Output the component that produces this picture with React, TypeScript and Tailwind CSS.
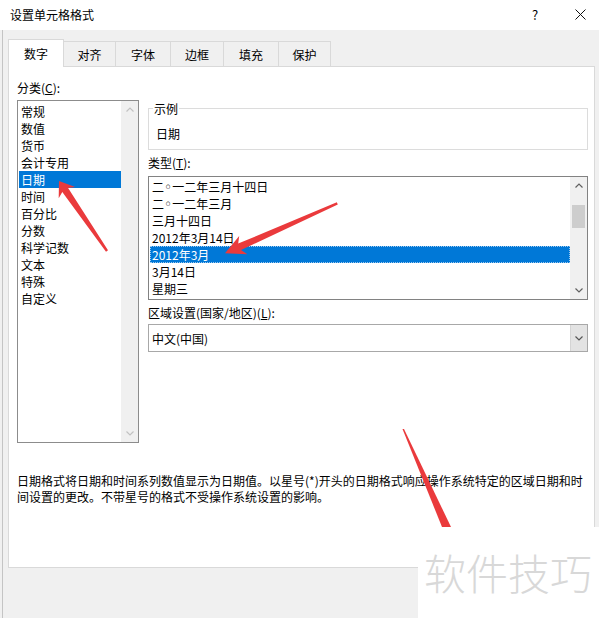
import React from "react";

const cats = ["常规", "数值", "货币", "会计专用", "日期", "时间", "百分比", "分数", "科学记数", "文本", "特殊", "自定义"];
const types = ["二◦一二年三月十四日", "二◦一二年三月", "三月十四日", "2012年3月14日", "2012年3月", "3月14日", "星期三"];
const tabs: [string, number][] = [
  ["数字", 56],
  ["对齐", 52],
  ["字体", 55],
  ["边框", 53],
  ["填充", 55],
  ["保护", 52],
];

function Chev({ up, color }: { up?: boolean; color: string }) {
  return (
    <svg width="8" height="5" viewBox="0 0 8 5">
      <polyline
        points={up ? "0.5,4.5 4,1 7.5,4.5" : "0.5,0.5 4,4 7.5,0.5"}
        fill="none"
        stroke={color}
        strokeWidth="1.2"
      />
    </svg>
  );
}

function TypeText({ t }: { t: string }) {
  const parts = t.split("◦");
  if (parts.length === 1) return <>{t}</>;
  return (
    <>
      {parts[0]}
      <span className="font-['DejaVu_Sans',sans-serif] text-[14px] leading-[14px]">◦</span>
      {parts[1]}
    </>
  );
}

export default function App() {
  return (
    <div className="relative w-[599px] h-[618px] overflow-hidden bg-[#f0f0f0] text-[12px] leading-[17px] text-black font-['Noto_Sans_CJK_SC',sans-serif]">
      {/* Title bar */}
      <div className="h-[30px] bg-white flex items-center pl-[10px] pr-[13px] pb-[2px]">
        <span className="flex-1">设置单元格格式</span>
        <span className="w-[12px] text-center mr-[34px] text-[13px]">?</span>
        <svg width="11" height="11" viewBox="0 0 11 11">
          <path d="M0.5 0.5 L10.5 10.5 M10.5 0.5 L0.5 10.5" stroke="#111" strokeWidth="1" fill="none" />
        </svg>
      </div>

      {/* Body */}
      <div className="ml-[2px] border-l border-[#c4c4c4] h-[588px] pl-[5px] pr-[4px] pt-[9px]">
        {/* Tabs */}
        <div className="flex items-end h-[27px]">
          {tabs.map(([label, w], i) =>
            i === 0 ? (
              <div
                key={label}
                style={{ width: w }}
                className="relative z-10 h-[28px] -mb-px bg-white border border-b-0 border-[#d9d9d9] flex items-center justify-center"
              >
                {label}
              </div>
            ) : (
              <div
                key={label}
                style={{ width: w }}
                className="h-[25px] border-t border-r border-[#d9d9d9] bg-[#f0f0f0] flex items-center justify-center"
              >
                {label}
              </div>
            )
          )}
        </div>

        {/* Panel */}
        <div className="h-[502px] border border-[#d9d9d9] bg-white flex flex-col pl-[8px] pt-[12px]">
          <div className="flex items-start">
            {/* Left column */}
            <div className="flex flex-col">
              <div className="h-[17px] mb-[4px]">
                分类(<span className="underline">C</span>):
              </div>
              <div className="w-[122px] h-[343px] border border-[#8c8c8c] flex">
                <div className="flex-1 pt-[2px] pl-[1px]">
                  {cats.map((c) => (
                    <div
                      key={c}
                      className={
                        "h-[17px] pl-[2px] whitespace-nowrap " +
                        (c === "日期" ? "bg-[#0078d7] text-white" : "")
                      }
                    >
                      {c}
                    </div>
                  ))}
                </div>
                <div className="w-[17px] bg-[#f0f0f0] flex flex-col justify-between">
                  <div className="h-[17px] flex items-center justify-center">
                    <Chev up color="#c2c2c2" />
                  </div>
                  <div className="h-[17px] flex items-center justify-center">
                    <Chev color="#c2c2c2" />
                  </div>
                </div>
              </div>
            </div>

            {/* Right column */}
            <div className="ml-[9px] mt-[21px] w-[440px] flex flex-col">
              <fieldset className="border border-[#dcdcdc] pl-[4px] m-0">
                <legend className="px-[1px] leading-[17px]">示例</legend>
                <div className="h-[17px] mt-[8px] mb-[7px] pl-[3px]">日期</div>
              </fieldset>

              <div className="h-[17px] mt-[4px]">
                类型(<span className="underline">T</span>):
              </div>
              <div className="mt-[5px] h-[124px] border border-[#828282] flex">
                <div className="flex-1 pt-[1px] pl-[1px]">
                  {types.map((t) => (
                    <div
                      key={t}
                      className={
                        "h-[17px] pl-[2px] whitespace-nowrap " +
                        (t === "2012年3月"
                          ? "bg-[#0078d7] text-white outline outline-1 outline-dotted outline-[#9cc8ef] -outline-offset-1"
                          : "")
                      }
                    >
                      <TypeText t={t} />
                    </div>
                  ))}
                </div>
                <div className="w-[17px] bg-[#f0f0f0] flex flex-col">
                  <div className="h-[17px] flex items-center justify-center">
                    <Chev up color="#606060" />
                  </div>
                  <div className="flex-1">
                    <div className="mt-[11px] mx-auto w-[13px] h-[23px] bg-[#cdcdcd]" />
                  </div>
                  <div className="h-[17px] flex items-center justify-center">
                    <Chev color="#606060" />
                  </div>
                </div>
              </div>

              <div className="h-[17px] mt-[4px]">
                区域设置(国家/地区)(<span className="underline">L</span>):
              </div>
              <div className="mt-[3px] h-[28px] border border-[#a8a8a8] flex">
                <div className="flex-1 pl-[3px] flex items-center">中文(中国)</div>
                <div className="w-[17px] bg-[#e3e3e3] border-l border-[#d4d4d4] flex items-center justify-center">
                  <Chev color="#555555" />
                </div>
              </div>
            </div>
          </div>

          {/* Description */}
          <div className="mt-[30px] leading-[16px] whitespace-nowrap">
            <div>日期格式将日期和时间系列数值显示为日期值。以星号(*)开头的日期格式响应操作系统特定的区域日期和时</div>
            <div>间设置的更改。不带星号的格式不受操作系统设置的影响。</div>
          </div>
        </div>
      </div>

      {/* Red annotation arrows */}
      <svg className="absolute inset-0 pointer-events-none" width="599" height="618" viewBox="0 0 599 618">
        <polygon
          points="59,181 75.2,187 68.1,188.1 108,250.3 106,251.7 62.3,192.1 58.7,198.2"
          fill="#ea3a3c"
        />
        <polygon
          points="225,253.3 239.2,236.1 238.2,243.6 336.8,202.2 337.8,204.4 241,250 247.4,254.3"
          fill="#ea3a3c"
        />
        <polygon points="402.5,429 404,429 451,527 442,527" fill="#ea3a3c" />
      </svg>

      {/* Watermark */}
      <div className="absolute left-[418px] top-[527px] right-0 bottom-0 bg-white pl-[6px] pt-[24px]">
        <div className="text-[42px] leading-none font-light text-[#d8d8d8] whitespace-nowrap">软件技巧</div>
      </div>
    </div>
  );
}
